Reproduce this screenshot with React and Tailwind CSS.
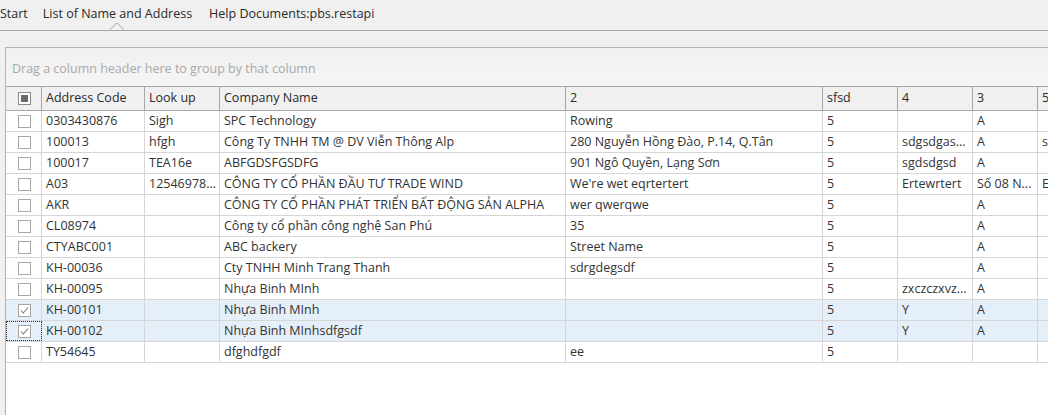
const cols = [
  { key: 'code', label: 'Address Code', w: 'w-[103px]' },
  { key: 'look', label: 'Look up', w: 'w-[75px]' },
  { key: 'company', label: 'Company Name', w: 'w-[346px]' },
  { key: 'c2', label: '2', w: 'w-[257px]' },
  { key: 'sfsd', label: 'sfsd', w: 'w-[75px]' },
  { key: 'c4', label: '4', w: 'w-[75px]' },
  { key: 'c3', label: '3', w: 'w-[65px]' },
  { key: 'c5', label: '5', w: 'w-[100px]' },
]

const rows = [
  { code: '0303430876', look: 'Sigh', company: 'SPC Technology', c2: 'Rowing', sfsd: '5', c4: '', c3: 'A', c5: '' },
  { code: '100013', look: 'hfgh', company: 'Công Ty TNHH TM @ DV Viễn Thông Alp', c2: '280 Nguyễn Hồng Đào, P.14, Q.Tân', sfsd: '5', c4: 'sdgsdgas...', c3: 'A', c5: 'sdfsdf' },
  { code: '100017', look: 'TEA16e', company: 'ABFGDSFGSDFG', c2: '901 Ngô Quyền, Lạng Sơn', sfsd: '5', c4: 'sgdsdgsd', c3: 'A', c5: '' },
  { code: 'A03', look: '12546978...', company: 'CÔNG TY CỔ PHẦN ĐẦU TƯ TRADE WIND', c2: "We're wet eqrtertert", sfsd: '5', c4: 'Ertewrtert', c3: 'Số 08 N...', c5: 'Ertert' },
  { code: 'AKR', look: '', company: 'CÔNG TY CỔ PHẦN PHÁT TRIỂN BẤT ĐỘNG SẢN ALPHA', c2: 'wer qwerqwe', sfsd: '5', c4: '', c3: 'A', c5: '' },
  { code: 'CL08974', look: '', company: 'Công ty cổ phần công nghệ San Phú', c2: '35', sfsd: '5', c4: '', c3: 'A', c5: '' },
  { code: 'CTYABC001', look: '', company: 'ABC backery', c2: 'Street Name', sfsd: '5', c4: '', c3: 'A', c5: '' },
  { code: 'KH-00036', look: '', company: 'Cty TNHH Minh Trang Thanh', c2: 'sdrgdegsdf', sfsd: '5', c4: '', c3: 'A', c5: '' },
  { code: 'KH-00095', look: '', company: 'Nhựa Binh MInh', c2: '', sfsd: '5', c4: 'zxczczxvz...', c3: 'A', c5: '' },
  { code: 'KH-00101', look: '', company: 'Nhựa Binh MInh', c2: '', sfsd: '5', c4: 'Y', c3: 'A', c5: '', sel: true },
  { code: 'KH-00102', look: '', company: 'Nhựa Binh MInhsdfgsdf', c2: '', sfsd: '5', c4: 'Y', c3: 'A', c5: '', sel: true, focus: true },
  { code: 'TY54645', look: '', company: 'dfghdfgdf', c2: 'ee', sfsd: '5', c4: '', c3: '', c5: '' },
]

function Check({ checked }) {
  return (
    <div className="w-[13px] h-[13px] border border-[#a6a6a6] bg-white flex items-center justify-center">
      {checked && (
        <svg width="11" height="11" viewBox="0 0 11 11">
          <path d="M2 5.5 L4.3 8 L9 2.5" fill="none" stroke="#7a7a7a" strokeWidth="1.1" />
        </svg>
      )}
    </div>
  )
}

export default function App() {
  return (
    <div className="w-[1048px] h-[415px] overflow-hidden bg-[#f0f0f0] text-[#333] font-['Open_Sans',sans-serif] text-[12px]">
      {/* tabs */}
      <div className="relative h-[31px] border-b border-[#a7a7a7] flex items-center gap-[15px] text-[12.5px] text-[#2a2a2a] pb-[1px]">
        <span>Start</span>
        <span className="relative">
          List of Name and Address
          <svg className="absolute left-1/2 -translate-x-1/2 top-[17px]" width="14" height="8" viewBox="0 0 14 8">
            <path d="M0 7.5 L7 1 L14 7.5" fill="#f0f0f0" stroke="#a7a7a7" strokeWidth="1" />
          </svg>
        </span>
        <span className="ml-[2px]">Help Documents:pbs.restapi</span>
      </div>

      <div className="mt-[16px] ml-[5px] border-l border-t border-[#b3b3b3] bg-white h-[400px]">
        <div className="h-[38px] bg-gradient-to-b from-[#f0f0f0] to-[#f5f5f5] flex items-center pl-[6px] pt-[5px] text-[#a9a9a9] text-[12.5px]">
          Drag a column header here to group by that column
        </div>
        {/* header */}
        <div className="flex h-[25px] border-t border-b border-[#a8a8a8] bg-[#f0f0f0] w-[1200px]">
          <div className="w-[36px] shrink-0 border-r border-[#a8a8a8] flex items-center justify-center pl-[1px]">
            <div className="w-[13px] h-[13px] border border-[#8a8a8a] bg-white flex items-center justify-center">
              <div className="w-[7px] h-[7px] bg-[#6b6b6b]" />
            </div>
          </div>
          {cols.map(c => (
            <div key={c.key} className={`${c.w} shrink-0 border-r border-[#a8a8a8] flex items-center pl-[4px] text-[12.5px] text-[#2a2a2a]`}>
              {c.label}
            </div>
          ))}
        </div>
        {rows.map((r, i) => (
          <div key={i} className={`flex h-[21px] border-b border-[#d6d6d6] w-[1200px] ${r.sel ? 'bg-[#e4eff9]' : 'bg-white'}`}>
            <div className={`w-[36px] shrink-0 border-r border-[#d6d6d6] flex items-center justify-center pl-[1px] ${r.focus ? 'outline-1 outline-dotted outline-[#333] -outline-offset-1' : ''}`}>
              <Check checked={r.sel} />
            </div>
            {cols.map(c => (
              <div key={c.key} className={`${c.w} shrink-0 border-r border-[#d6d6d6] flex items-center pl-[4px] whitespace-nowrap overflow-hidden text-[12.5px] text-[#333]`}>
                {r[c.key]}
              </div>
            ))}
          </div>
        ))}
      </div>
    </div>
  )
}
